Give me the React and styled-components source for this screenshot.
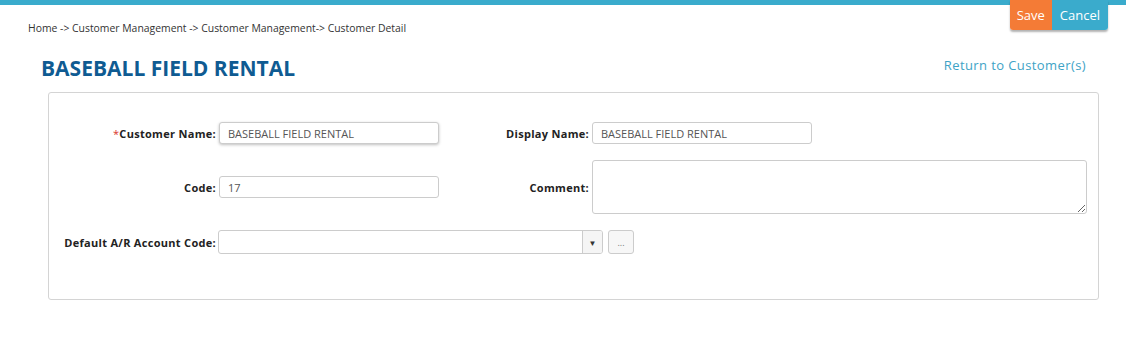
import React from "react";
import styled, { createGlobalStyle } from "styled-components";

const GlobalStyle = createGlobalStyle`
	body {
		margin: 0;
		background: #fff;
		font-family: "Open Sans", "Liberation Sans", sans-serif;
		color: #333;
	}
`;

const Page = styled.div`
	position: relative;
	width: 1126px;
	height: 348px;
	border-top: 5px solid #3aabcc;
	box-sizing: border-box;
`;

const ActionBar = styled.div`
	position: absolute;
	top: -5px;
	right: 18px;
	display: flex;
	border-radius: 0 0 3px 3px;
	box-shadow: 0 2px 2px rgba(0, 0, 0, 0.3);
	overflow: hidden;
`;

const ActionButton = styled.button`
	border: none;
	height: 30px;
	padding: 0 ${(p) => p.$pad}px;
	background: ${(p) => p.$bg};
	color: #fff;
	font-family: "Open Sans", sans-serif;
	font-size: 13px;
	cursor: pointer;
`;

const Breadcrumb = styled.div`
	padding: 16px 0 0 28px;
	font-size: 10.4px;
	line-height: 14px;
	color: #333;
`;

const TitleRow = styled.div`
	display: flex;
	align-items: center;
	justify-content: space-between;
	padding: 19px 40px 0 41px;
`;

const Title = styled.h1`
	margin: 0;
	font-size: 21px;
	font-weight: 700;
	color: #0f5b92;
	line-height: 28px;
`;

const ReturnLink = styled.a`
	font-size: 13px;
	letter-spacing: 0.4px;
	color: #3ea3c6;
	text-decoration: none;
	margin-top: -7px;
`;

const Panel = styled.div`
	margin: 10px 27px 0 48px;
	border: 1px solid #d4d4d4;
	border-radius: 3px;
	padding: 29px 0 45px;
`;

const FormGrid = styled.div`
	display: grid;
	grid-template-columns: 167px 220px 147px 495px;
	column-gap: 3px;
	row-gap: 16px;
	align-items: center;
`;

const Label = styled.label`
	text-align: right;
	font-size: 11px;
	font-weight: 700;
	letter-spacing: 0.3px;
	color: #222;
	white-space: nowrap;
`;

const Required = styled.span`
	color: #d9342b;
	font-weight: 400;
`;

const TextInput = styled.input`
	box-sizing: border-box;
	width: 220px;
	height: 22px;
	border: 1px solid #ccc;
	border-radius: 3px;
	padding: 0 8px;
	font-family: "Open Sans", sans-serif;
	font-size: 11px;
	color: #555;
	outline: none;
	box-shadow: ${(p) => (p.$focused ? "0 1px 3px rgba(0,0,0,0.25)" : "none")};
`;

const Comment = styled.textarea`
	box-sizing: border-box;
	width: 495px;
	height: 54px;
	border: 1px solid #ccc;
	border-radius: 3px;
	display: block;
	font-family: "Open Sans", sans-serif;
	font-size: 11px;
`;

const ComboRow = styled.div`
	grid-column: 2 / span 3;
	display: flex;
	align-items: center;
	gap: 5px;
	margin-left: -1px;
`;

const Combo = styled.div`
	box-sizing: border-box;
	width: 385px;
	height: 24px;
	border: 1px solid #ccc;
	border-radius: 3px;
	display: flex;
	overflow: hidden;
`;

const ComboField = styled.div`
	flex: 1;
`;

const ComboArrow = styled.div`
	width: 19px;
	border-left: 1px solid #ccc;
	background: #f5f5f5;
	display: flex;
	align-items: center;
	justify-content: center;
	font-size: 8px;
	color: #333;
`;

const LookupButton = styled.button`
	box-sizing: border-box;
	width: 26px;
	height: 24px;
	border: 1px solid #ccc;
	border-radius: 3px;
	background: #f7f7f7;
	color: #777;
	font-size: 9px;
	padding: 0;
	font-family: "Open Sans", sans-serif;
`;

export default function App() {
	return (
		<>
			<GlobalStyle />
			<Page>
				<ActionBar>
					<ActionButton $bg="#f47b36" $pad={7}>Save</ActionButton>
					<ActionButton $bg="#3aabcc" $pad={8}>Cancel</ActionButton>
				</ActionBar>

				<Breadcrumb>
					Home -&gt; Customer Management -&gt; Customer Management-&gt; Customer Detail
				</Breadcrumb>

				<TitleRow>
					<Title>BASEBALL FIELD RENTAL</Title>
					<ReturnLink href="#">Return to Customer(s)</ReturnLink>
				</TitleRow>

				<Panel>
					<FormGrid>
						<Label>
							<Required>*</Required>Customer Name:
						</Label>
						<TextInput $focused defaultValue="BASEBALL FIELD RENTAL" />
						<Label>Display Name:</Label>
						<TextInput defaultValue="BASEBALL FIELD RENTAL" />

						<Label>Code:</Label>
						<TextInput defaultValue="17" />
						<Label>Comment:</Label>
						<Comment />

						<Label>Default A/R Account Code:</Label>
						<ComboRow>
							<Combo>
								<ComboField />
								<ComboArrow>▼</ComboArrow>
							</Combo>
							<LookupButton>...</LookupButton>
						</ComboRow>
					</FormGrid>
				</Panel>
			</Page>
		</>
	);
}
